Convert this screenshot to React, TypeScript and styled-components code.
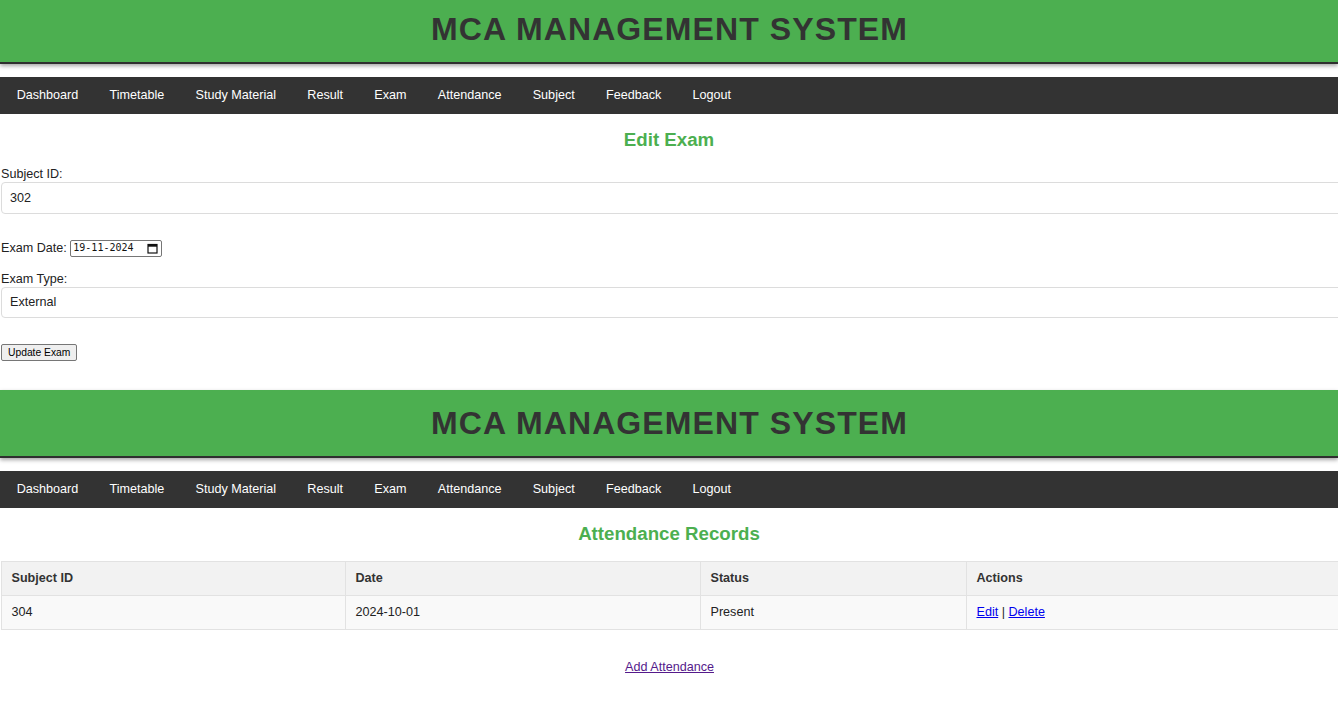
import React from "react";
import styled, { createGlobalStyle } from "styled-components";

const GlobalStyle = createGlobalStyle`
  html, body {
    margin: 0;
    padding: 0;
    overflow: hidden;
    background: #ffffff;
  }
  body {
    font-family: "Liberation Sans", Arial, sans-serif;
    font-size: 12.6px;
    color: #222;
  }
`;

const Page = styled.section<{ $shift?: number }>`
  margin-top: ${(p) => (p.$shift ? `${p.$shift}px` : "0")};
  display: flex;
  flex-direction: column;
`;

const Header = styled.header`
  background: #4caf50;
  border-bottom: 2px solid #2f2f2f;
  box-shadow: 0 2px 4px rgba(0, 0, 0, 0.35);
  text-align: center;
`;

const Title = styled.h1`
  margin: 0;
  padding: 14.5px 0 14.5px 1px;
  font-size: 32px;
  line-height: 37px;
  letter-spacing: 1.1px;
  font-weight: bold;
  color: #333;
`;

const Nav = styled.nav`
  margin-top: 12.5px;
  background: #333;
  display: flex;
  padding-left: 1px;
`;

const NavLink = styled.a`
  color: #fff;
  text-decoration: none;
  padding: 11.25px 15.625px;
  line-height: 15px;
  font-size: 12.6px;
`;

const Heading = styled.h2`
  margin: 15px 0 16.5px;
  text-align: center;
  color: #4caf50;
  font-size: 18.7px;
  line-height: 21.5px;
  font-weight: bold;
`;

const Content = styled.div`
  padding-left: 1px;
  display: flex;
  flex-direction: column;
`;

const Label = styled.label`
  display: block;
  line-height: 14.5px;
  margin-bottom: 0.5px;
`;

const TextInput = styled.input`
  display: block;
  width: 100%;
  box-sizing: content-box;
  height: 14.5px;
  padding: 7.5px 8px;
  margin: 0 0 26px;
  border: 1px solid #dcdcdc;
  border-radius: 4px;
  font-family: "Liberation Sans", Arial, sans-serif;
  font-size: 12.6px;
  color: #222;
  outline: none;
`;

const DateRow = styled.div`
  display: flex;
  align-items: center;
  height: 17px;
  margin-bottom: 15px;
  line-height: 14.5px;
`;

const DateBox = styled.span`
  display: inline-flex;
  align-items: center;
  margin-left: 3.5px;
  height: 15px;
  padding: 0 2px;
  border: 1px solid #767676;
  border-radius: 2px;
  background: #fff;
  box-sizing: content-box;
`;

const DateText = styled.span`
  font-family: "DejaVu Sans Mono", "Liberation Mono", monospace;
  font-size: 10px;
  color: #111;
  width: 74px;
`;

const CalendarIcon = styled.svg`
  width: 11px;
  height: 11px;
  margin-right: 1px;
`;

const Button = styled.button`
  align-self: flex-start;
  height: 17px;
  padding: 0 6px;
  font-family: "Liberation Sans", Arial, sans-serif;
  font-size: 10.3px;
  color: #000;
  background: #efefef;
  border: 1px solid #767676;
  border-radius: 2px;
  margin: 0 0 29px;
`;

const Table = styled.table`
  border-collapse: collapse;
  table-layout: fixed;
  width: calc(100% + 30px);
  border: 1px solid #ddd;
`;

const Th = styled.th`
  background: #f2f2f2;
  color: #333;
  font-weight: bold;
  text-align: left;
  padding: 9.25px 9.5px;
  line-height: 14.5px;
  border: 1px solid #e2e2e2;
`;

const Td = styled.td`
  background: #f9f9f9;
  color: #222;
  padding: 9.25px 9.5px;
  line-height: 14.5px;
  border: 1px solid #e2e2e2;
`;

const ActionLink = styled.a`
  color: #0000ee;
  text-decoration: underline;
`;

const AddRow = styled.p`
  margin: 30px 0 0;
  text-align: center;
  line-height: 14.5px;
`;

const AddLink = styled.a`
  color: #551a8b;
  text-decoration: underline;
`;

const navItems = [
  "Dashboard",
  "Timetable",
  "Study Material",
  "Result",
  "Exam",
  "Attendance",
  "Subject",
  "Feedback",
  "Logout",
];

const TopBar: React.FC = () => (
  <>
    <Header>
      <Title>MCA MANAGEMENT SYSTEM</Title>
    </Header>
    <Nav>
      {navItems.map((n) => (
        <NavLink key={n} href="#">
          {n}
        </NavLink>
      ))}
    </Nav>
  </>
);

export default function App() {
  return (
    <>
      <GlobalStyle />
      <Page $shift={-4}>
        <TopBar />
        <Heading>Edit Exam</Heading>
        <Content>
          <Label>Subject ID:</Label>
          <TextInput defaultValue="302" />
          <DateRow>
            <span>Exam Date:</span>
            <DateBox>
              <DateText>19-11-2024</DateText>
              <CalendarIcon viewBox="0 0 11 11">
                <rect x="1" y="1.5" width="9" height="8.5" fill="none" stroke="#111" strokeWidth="1.2" />
                <rect x="1" y="1.5" width="9" height="2.2" fill="#111" />
              </CalendarIcon>
            </DateBox>
          </DateRow>
          <Label>Exam Type:</Label>
          <TextInput defaultValue="External" />
          <Button>Update Exam</Button>
        </Content>
      </Page>
      <Page>
        <TopBar />
        <Heading>Attendance Records</Heading>
        <Content>
          <Table>
            <colgroup>
              <col style={{ width: 344 }} />
              <col style={{ width: 355 }} />
              <col style={{ width: 266 }} />
              <col />
            </colgroup>
            <thead>
              <tr>
                <Th>Subject ID</Th>
                <Th>Date</Th>
                <Th>Status</Th>
                <Th>Actions</Th>
              </tr>
            </thead>
            <tbody>
              <tr>
                <Td>304</Td>
                <Td>2024-10-01</Td>
                <Td>Present</Td>
                <Td>
                  <ActionLink href="#">Edit</ActionLink> | <ActionLink href="#">Delete</ActionLink>
                </Td>
              </tr>
            </tbody>
          </Table>
          <AddRow>
            <AddLink href="#">Add Attendance</AddLink>
          </AddRow>
        </Content>
      </Page>
    </>
  );
}
